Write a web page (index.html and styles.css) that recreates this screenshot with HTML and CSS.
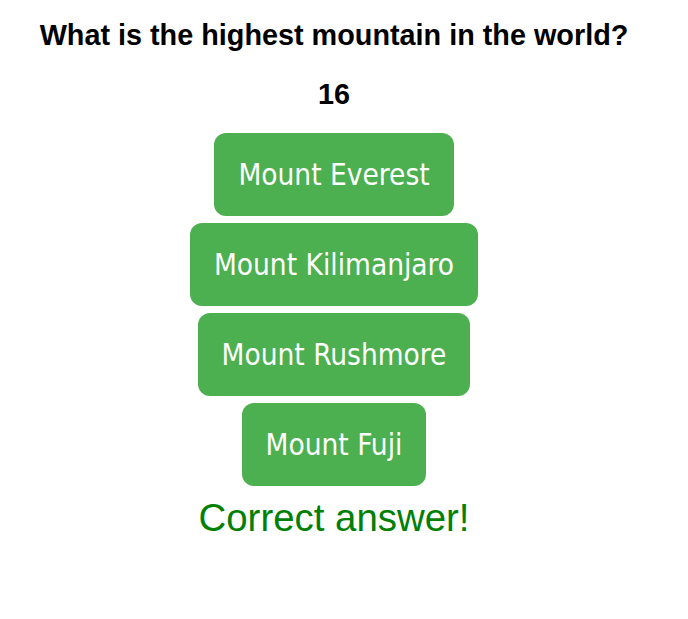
FILE: index.html
```html
<!DOCTYPE html>
<html>
<head>
<meta charset="utf-8">
<link rel="stylesheet" href="styles.css">
</head>
<body>
<div class="quiz">
  <h2 class="question">What is the highest mountain in the world?</h2>
  <div class="timer">16</div>
  <div class="answers">
    <button class="answer">Mount Everest</button>
    <button class="answer">Mount Kilimanjaro</button>
    <button class="answer">Mount Rushmore</button>
    <button class="answer">Mount Fuji</button>
  </div>
  <div class="result">Correct answer!</div>
</div>
</body>
</html>
```
FILE: styles.css
```css
body {
  margin: 8px;
  font-family: "Liberation Sans", Arial, sans-serif;
  background: #fff;
}
.quiz {
  display: flex;
  flex-direction: column;
  align-items: center;
  width: 652px;
}
.question {
  font-size: 28.8px;
  font-weight: bold;
  margin: 11px 0 0;
  line-height: 33px;
}
.timer {
  font-size: 28.8px;
  font-weight: bold;
  margin-top: 26px;
  line-height: 33px;
}
.answers {
  display: flex;
  flex-direction: column;
  align-items: center;
  gap: 7px;
  margin-top: 22px;
}
.answer {
  background: #4caf50;
  color: #fff;
  border: none;
  border-radius: 12px;
  font-family: "DejaVu Sans Condensed", "DejaVu Sans", sans-serif;
  font-size: 29.5px;
  line-height: 35px;
  padding: 25px 24px 23px;
}
.result {
  color: #008000;
  font-size: 38.4px;
  line-height: 44px;
  margin-top: 9.7px;
}
```
